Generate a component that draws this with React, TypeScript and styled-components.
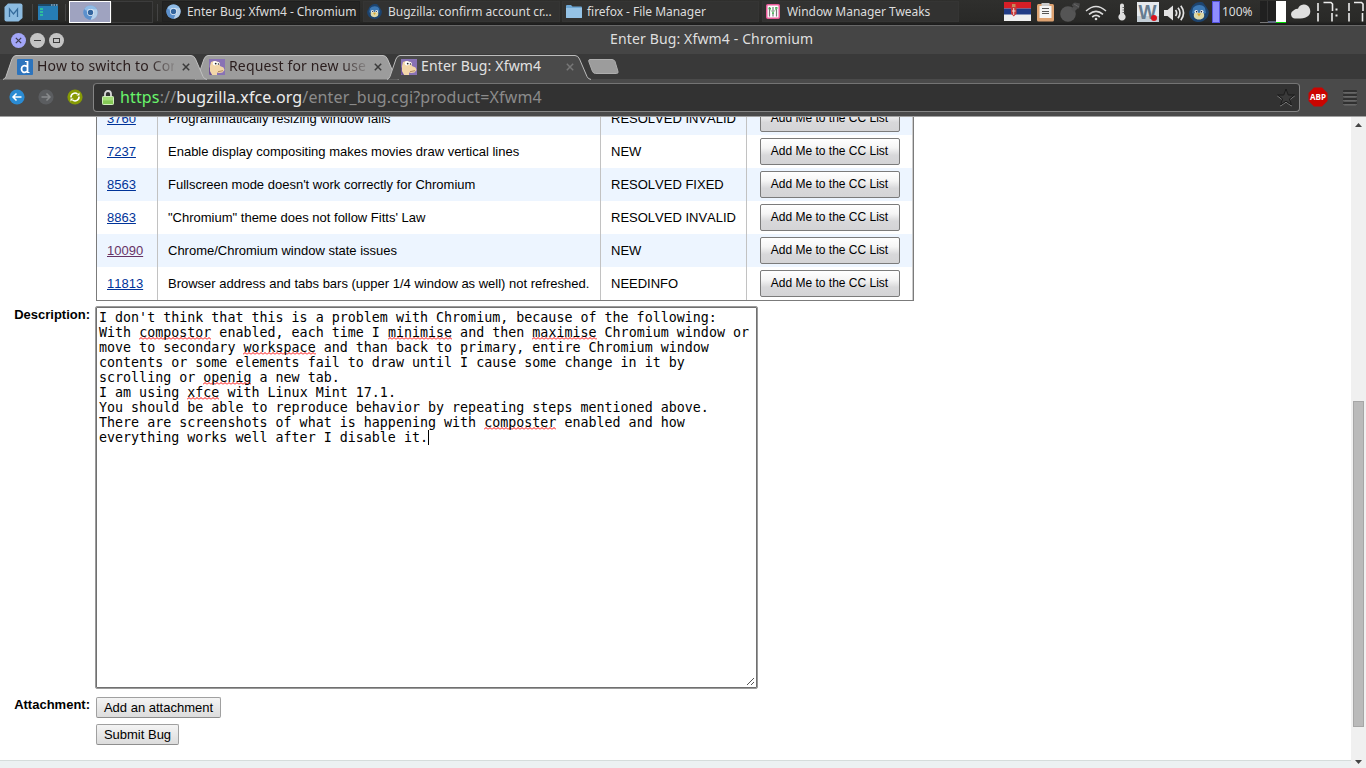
import React from 'react';
import styled, { createGlobalStyle, css } from 'styled-components';

const GlobalStyle = createGlobalStyle`
  * { box-sizing: border-box; }
  body { margin: 0; background: #fff; overflow: hidden; }
`;

const Desktop = styled.div`
  width: 1366px;
  height: 768px;
  display: flex;
  flex-direction: column;
  overflow: hidden;
  background: #fff;
  font-family: 'Liberation Sans', Arial, sans-serif;
  font-size: 13px;
  color: #000;
`;

/* ---------- desktop panel ---------- */

const Panel = styled.header`
  height: 25px;
  flex: none;
  display: flex;
  align-items: flex-start;
  background: linear-gradient(#2f2f2d, #292927 85%, #1b1b1b);
  font-family: 'Noto Sans', sans-serif;
`;

const Slot = styled.div<{ $w: number; $gap?: number; $top?: number }>`
  flex: none;
  width: ${(p) => p.$w}px;
  margin-left: ${(p) => p.$gap ?? 0}px;
  margin-top: ${(p) => p.$top ?? 0}px;
  svg { display: block; }
`;

const Separator = styled.div<{ $gap: number }>`
  flex: none;
  width: 1px;
  height: 17px;
  margin: 4px 0 0 ${(p) => p.$gap}px;
  background: #444;
`;

const Pager = styled.div`
  flex: none;
  display: flex;
  margin: 1px 0 0 3px;
  height: 23px;
`;

const Workspace = styled.div<{ $active?: boolean }>`
  width: 42px;
  height: 22px;
  display: flex;
  align-items: center;
  justify-content: center;
  border: 1px solid ${(p) => (p.$active ? '#fff' : '#3c3c3c')};
  background: ${(p) => (p.$active ? '#9fa3c0' : '#2a2a29')};
`;

const Task = styled.div<{ $gap: number; $active?: boolean; $w: number }>`
  flex: none;
  display: flex;
  align-items: center;
  gap: 5px;
  width: ${(p) => p.$w}px;
  height: 21px;
  margin: 1px 0 0 ${(p) => p.$gap}px;
  padding-left: 3px;
  background: ${(p) => (p.$active ? '#242423' : '#323231')};
  border: 1px solid ${(p) => (p.$active ? '#202020' : '#353534')};
  color: #dcdcdc;
`;

const TaskIcon = styled.div`
  display: flex;
  width: 16px;
`;

const TaskLabel = styled.span<{ $ls?: number }>`
  font-size: 12px;
  line-height: 18px;
  letter-spacing: ${(p) => p.$ls ?? 0}px;
  white-space: nowrap;
`;

const Battery = styled.div`
  width: 8px;
  height: 22px;
  border: 1px solid #5654e0;
  background: #8f8dff;
`;

const BatteryText = styled.div`
  font-size: 12px;
  line-height: 22px;
  color: #dcdcdc;
  white-space: nowrap;
`;

/* ---------- window frame ---------- */

const TitleBar = styled.div`
  flex: none;
  height: 29px;
  display: flex;
  align-items: center;
  padding-left: 11px;
  border-top: 1px solid #686868;
  background: #454545;
`;

const WindowButtons = styled.div`
  display: flex;
  gap: 4px;
  width: 599px;
`;

const WindowTitle = styled.div`
  font: 14px/20px 'Noto Sans', sans-serif;
  letter-spacing: 0.14px;
  color: #dfdfdf;
  padding-bottom: 3px;
  white-space: nowrap;
`;

const TabStrip = styled.div`
  flex: none;
  display: flex;
  height: 25px;
  padding: 1px 0 0 3px;
  background: #393939;
`;

const Tab = styled.div<{ $first?: boolean; $z: number }>`
  position: relative;
  z-index: ${(p) => p.$z};
  width: 204px;
  height: 24px;
  flex: none;
  display: flex;
  align-items: center;
  padding-left: 14px;
  margin-left: ${(p) => (p.$first ? 0 : -12)}px;
`;

const TabShape = styled.svg`
  position: absolute;
  left: 0;
  top: 0;
`;

const TabIcon = styled.div`
  position: relative;
  width: 16px;
  height: 16px;
  svg { display: block; }
`;

const TabTitle = styled.div<{ $active?: boolean }>`
  position: relative;
  width: 137px;
  height: 22px;
  margin-left: 4px;
  overflow: hidden;
  white-space: nowrap;
  font: 14px/20px 'Noto Sans', sans-serif;
  letter-spacing: 0.16px;
  color: ${(p) => (p.$active ? '#e2e2e2' : '#2a1d1d')};
  ${(p) =>
    !p.$active &&
    css`
      mask-image: linear-gradient(to right, #000 112px, transparent 142px);
    `}
`;

const TabClose = styled.svg`
  position: relative;
  margin-left: 8px;
`;

const NewTab = styled.svg`
  flex: none;
  margin: 4px 0 0 -3px;
`;

const Toolbar = styled.div`
  flex: none;
  display: flex;
  height: 38px;
  padding: 4px 0 0 9px;
  background: #4a4a4a;
  border-bottom: 1px solid #a0a0a0;
`;

const NavButton = styled.div`
  width: 29px;
  padding-top: 6px;
  svg { display: block; }
`;

const Omnibox = styled.div`
  display: flex;
  align-items: center;
  width: 1207px;
  height: 29px;
  margin-left: -3px;
  padding: 0 3px 0 8px;
  border: 1px solid #858585;
  border-top-color: #747474;
  border-radius: 4px;
  background: #323232;
  font: 16px/24px 'Noto Sans', sans-serif;
  letter-spacing: 0.14px;
  color: #8b8b8b;
`;

const Url = styled.div`
  flex: 1;
  padding: 0 0 2px 6px;
  white-space: nowrap;
`;

const Scheme = styled.span`
  color: #69f56b;
`;

const Host = styled.span`
  color: #ececec;
`;

const ToolButton = styled.div<{ $gap: number; $top: number }>`
  margin: ${(p) => p.$top}px 0 0 ${(p) => p.$gap}px;
  svg { display: block; }
`;

/* ---------- page ---------- */

const Viewport = styled.div`
  flex: 1;
  min-height: 0;
  display: flex;
  overflow: hidden;
`;

const Page = styled.main`
  width: 1351px;
  height: 651px;
  display: flex;
  flex-direction: column;
  overflow: hidden;
`;

const BugTable = styled.div`
  flex: none;
  width: 818px;
  height: 200px;
  margin: -16px 0 0 96px;
  border: 1px solid #7b7b7b;
  box-shadow: inset -1px 0 #ccc;
  font-kerning: none;
`;

const BugRow = styled.div<{ $alt: boolean }>`
  display: grid;
  grid-template-columns: 61px 443px 146px 164px;
  width: 815px;
  height: 33px;
  background: ${(p) => (p.$alt ? '#edf5ff' : '#fff')};
`;

const Cell = styled.div`
  padding-left: 10px;
  border-right: 1px solid #c2c2c2;
  line-height: 33px;
  white-space: nowrap;
`;

const ActionCell = styled.div`
  padding: 3px 0 0 13px;
`;

const BugLink = styled.a<{ $visited?: boolean }>`
  color: ${(p) => (p.$visited ? '#663366' : '#039')};
  text-decoration: underline;
`;

const CcButton = styled.button`
  display: block;
  width: 140px;
  height: 27px;
  padding: 0 1px 2px 0;
  border: 1px solid #7b7b7b;
  border-radius: 2px;
  background: linear-gradient(#fff, #f5f5f5 35%, #d8d8da 65%, #d4d4d6);
  font: 12px 'Liberation Sans', Arial, sans-serif;
  color: #000;
  white-space: nowrap;
`;

const Form = styled.form`
  flex: none;
  display: grid;
  grid-template-columns: 90px 1fr;
  column-gap: 5px;
  padding-top: 5px;
`;

const Label = styled.label<{ $top: number }>`
  padding-top: ${(p) => p.$top}px;
  text-align: right;
  font-weight: bold;
  line-height: 15px;
`;

const Editor = styled.div`
  position: relative;
  width: 663px;
  height: 383px;
  padding: 3px 2px;
  border: 1px solid #9b9b9b;
  border-radius: 2px;
  box-shadow: inset 0 0 0 1px #707070;
  font: 13.333px/15px 'DejaVu Sans Mono', monospace;
  white-space: pre;
`;

const Line = styled.div`
  display: flex;
  height: 15px;
  padding-left: 1px;
`;

const Misspelt = styled.span`
  background-image: url("data:image/svg+xml,%3Csvg xmlns='http://www.w3.org/2000/svg' width='4' height='3'%3E%3Cpath d='M0 2.5 L2 .5 L4 2.5' fill='none' stroke='red' stroke-width='1'/%3E%3C/svg%3E");
  background-repeat: repeat-x;
  background-position: 0 12px;
`;

const Caret = styled.span`
  width: 1px;
  height: 15px;
  background: #000;
`;

const Grip = styled.svg`
  position: absolute;
  right: 2px;
  bottom: 2px;
`;

const FormButton = styled.button<{ $w: number; $top: number }>`
  display: block;
  width: ${(p) => p.$w}px;
  height: 21px;
  margin: ${(p) => p.$top}px 0 0 1px;
  padding: 0;
  border: 1px solid #a0a0a0;
  border-bottom-color: #8e8e8e;
  border-radius: 2px;
  background: linear-gradient(#f4f4f4, #dcdcdc);
  font: 13px/17px 'Liberation Sans', Arial, sans-serif;
  color: #000;
`;

const Footer = styled.footer`
  margin-top: auto;
  flex: none;
  height: 8px;
  border-top: 1px solid #d5dcdb;
  background: #ecf1f2;
`;

const Scrollbar = styled.div`
  width: 15px;
  display: flex;
  flex-direction: column;
  align-items: center;
  background: #f0f0f0;
  padding: 6px 0 4px;
`;

const Thumb = styled.div`
  width: 11px;
  height: 326px;
  margin: 274px 0 auto 0;
  border: 1px solid #a6a6a6;
  background: #bababa;
`;

/* ---------- drawings ---------- */

const ChromiumIcon = () => (
  <svg width="15" height="15" viewBox="0 0 16 16">
    <circle cx="8" cy="8" r="7.6" fill="#6b9ed6" />
    <path d="M8 8 1.2 4.6A7.6 7.6 0 0 1 15 5.2H8z" fill="#8fbbe6" />
    <path d="M8 4.500h6.700A7.6 7.6 0 0 1 8 15.6L11 9z" fill="#b4cfea" />
    <path d="M1.3 4.500A7.6 7.6 0 0 0 8 15.6L10.4 10 6 9.500z" fill="#5c90cc" />
    <circle cx="8" cy="8" r="3.700" fill="#e8eff7" />
    <circle cx="8" cy="8" r="2.900" fill="#33659f" />
  </svg>
);

const BirdIcon = ({ size }: { size: number }) => (
  <svg width={size} height={size} viewBox="0 0 20 20">
    <path d="M2 7C3 2 9-1 14 .5l3 4 2.500 4C21 14 16 20 10 20S-1 15 .5 9z" fill="#1d446f" />
    <path d="M4 6c3-4 10-4 12 0l1 5-7 3-7-3z" fill="#3c78b4" />
    <path d="M5 12c1-2.500 3-2.500 5-1 2-1.500 4-1.500 5 1 .8 3-1 5.500-5 5.500S4.200 15 5 12z" fill="#ddd8a8" />
    <circle cx="7.200" cy="9.600" r="1.700" fill="#f4f6f8" />
    <circle cx="12.800" cy="9.600" r="1.700" fill="#f4f6f8" />
    <circle cx="7.600" cy="9.800" r=".8" fill="#112" />
    <circle cx="12.400" cy="9.800" r=".8" fill="#112" />
    <path d="M8 11.500h4l-2 3z" fill="#d9a52f" />
  </svg>
);

const BuggieIcon = () => (
  <svg width="16" height="16" viewBox="0 0 16 16">
    <rect width="16" height="16" fill="#8872b5" />
    <path d="M1 7 2 3l3-1 5 1 1 4 3.500 1.500 1 2.500-2 2.500-3.500.5-2-.5L8 16H3L1 12z" fill="#f2d6a8" />
    <path d="M1 8v5l2 3H1l-1-2V9z" fill="#6b5090" />
    <circle cx="6" cy="4.200" r="2.200" fill="#fff" />
    <circle cx="9" cy="4.600" r="1.700" fill="#fff" />
    <circle cx="6.700" cy="4.600" r=".9" fill="#222" />
    <circle cx="9.400" cy="5" r=".7" fill="#222" />
    <path d="M9 12.700 14 11.700" stroke="#9d744c" strokeWidth=".8" />
  </svg>
);

const DocIcon = () => (
  <svg width="16" height="16" viewBox="0 0 16 16">
    <rect width="16" height="16" rx="1" fill="#2d74bd" />
    <path d="M10.500 2v11.500M10 7.500C7 5.800 4.500 7 4.500 10s2.500 4.500 5.500 2.500" fill="none" stroke="#fff" strokeWidth="1.800" />
    <path d="M8 2.500h3M10 13.500h2.500" stroke="#fff" />
  </svg>
);

const MenuLogo = () => (
  <svg width="19" height="19" viewBox="0 0 19 19">
    <path d="M4 .5h12.500q2 0 2 2V15l-4 3.500H2.500q-2 0-2-2V4z" fill="#8cbbe0" />
    <path d="M5.500 14V6l4 5 4-5v8" fill="none" stroke="#356b9b" strokeWidth="1.300" />
  </svg>
);

const ShowDesktopIcon = () => (
  <svg width="20" height="16" viewBox="0 0 20 16">
    <rect width="20" height="16" fill="#267db5" />
    <rect width="20" height="2" fill="#1c4a68" />
    <path d="M13 1h1.500M15.500 1H17M18 1h1.500" stroke="#cde" />
    <path d="M2 5h3M2 8h3M2 11h3" stroke="#2dbd9d" strokeWidth="2" />
  </svg>
);

const FolderIcon = () => (
  <svg width="16" height="13" viewBox="0 0 16 13">
    <path d="M0 1q0-1 1-1h4l1.500 1.500H15q1 0 1 1V13H0z" fill="#6da6d3" />
    <path d="M0 3h16v9q0 1-1 1H1q-1 0-1-1z" fill="#95c3e6" />
  </svg>
);

const TweaksIcon = () => (
  <svg width="14" height="15" viewBox="0 0 14 15">
    <rect x=".75" y=".75" width="12.500" height="13.500" rx="1" fill="#fff" stroke="#e85b98" strokeWidth="1.500" />
    <path d="M3.500 3v9.500M7 3v9.500M10.500 3v9.500" stroke="#777" strokeWidth="1.200" />
    <path d="M2.500 4.500h2.500M6 9h2M9 4h2.500" stroke="#3fb750" strokeWidth="1.700" />
    <path d="M4 5 7 9l3.500-5" fill="none" stroke="#7ccc84" strokeWidth=".8" />
  </svg>
);

const FlagIcon = () => (
  <svg width="27" height="19" viewBox="0 0 27 19">
    <rect width="27" height="19" fill="#f0f0f0" />
    <rect width="27" height="6.500" fill="#d71f27" />
    <rect y="6.500" width="27" height="6" fill="#223c85" />
    <path d="M7 4.500h5.500v7l-2.700 3L7 11.500z" fill="#c8383a" />
    <path d="M8 2h3.500v3H8z" fill="#c98a5b" />
    <path d="M9.700 6v7M8 9h3.500" stroke="#f0d8d0" />
  </svg>
);

const ClipboardIcon = () => (
  <svg width="17" height="19" viewBox="0 0 17 19">
    <rect y="1" width="17" height="17.500" rx="1.500" fill="#dda271" />
    <rect x="2.500" y="3" width="12" height="12" fill="#f4f4f4" />
    <path d="M4.500 0h8v3h-8z" fill="#ccc" />
    <path d="M5 5.500h7M5 8.500h7M5 10.500h7" stroke="#555" />
  </svg>
);

const MouseIcon = () => (
  <svg width="21" height="20" viewBox="0 0 21 20">
    <circle cx="8" cy="12" r="7.800" fill="#555" />
    <path d="m11 7 4-4 3 3-4 4z" fill="#505050" />
    <path d="M12 4q0-3 3-3.500L20 1.500l-1 5q-2 0-3-1z" fill="#4b4b4b" />
    <path d="M14 2l5 3" stroke="#666" />
  </svg>
);

const WifiIcon = () => (
  <svg width="22" height="16" viewBox="0 0 22 16" fill="none" stroke="#dcdcdc">
    <path d="M1 6Q11-3 21 6" strokeWidth="1.400" />
    <path d="M4 9.300q7-6 14 0" strokeWidth="1.700" />
    <path d="M7.200 12q3.800-3.300 7.600 0" strokeWidth="1.700" />
    <circle cx="11" cy="14" r="1.300" fill="#dcdcdc" stroke="none" />
  </svg>
);

const ThermometerIcon = () => (
  <svg width="8" height="18" viewBox="0 0 8 18">
    <path d="M2 2.500a2 2 0 0 1 4 0V11a3.600 3.600 0 1 1-4 0z" fill="#dedede" />
    <path d="M4.500 4.500h2M4.500 7h2M4.500 9.500h2" stroke="#555" strokeWidth=".9" />
  </svg>
);

const WordLetter = styled.text`
  font: bold 20px 'Liberation Sans', Arial, sans-serif;
  fill: #667c90;
`;

const WordIcon = () => (
  <svg width="22" height="20" viewBox="0 0 22 20">
    <rect width="22" height="20" fill="#e6eaee" />
    <path d="M0 14h22v6H0z" fill="#c4ced6" />
    <WordLetter x="10.500" y="16.500" textAnchor="middle" textLength="18" lengthAdjust="spacingAndGlyphs">W</WordLetter>
    <circle cx="17" cy="16" r="3" fill="#d9141e" />
  </svg>
);

const SpeakerIcon = () => (
  <svg width="21" height="18" viewBox="0 0 21 18">
    <path d="M0 6h3.500L9 1.500v15L3.500 12H0z" fill="#e2e2e2" />
    <path d="M11.500 6q2.300 3 0 6M14 3.800q4 5.200 0 10.400M16.800 1.800q5.500 7.200 0 14.400" fill="none" stroke="#e2e2e2" strokeWidth="1.700" />
  </svg>
);

const CpuGraph = () => (
  <svg width="26" height="22" viewBox="0 0 26 22">
    <rect width="26" height="22" fill="#202020" />
    <path d="M7.500 0v22" stroke="#333" />
    <rect y="21" width="8" height="1" fill="#777" />
    <rect x="8" y="20" width="8" height="2" fill="#5c647c" />
    <rect x="16" width="10" height="21" fill="#fff" />
    <rect x="16" y="21" width="10" height="1" fill="#0d0" />
  </svg>
);

const CloudIcon = () => (
  <svg width="20" height="16" viewBox="0 0 20 16">
    <path d="M4 14.500A4.200 4.200 0 0 1 2.500 6.500Q4.500 4.300 7 4.800A6.200 6.200 0 0 1 18.500 4q2.500 6-3 9-3 1.800-11.500 1.500z" fill="#dedede" />
  </svg>
);

const LcdClock = () => (
  <svg width="49" height="22" viewBox="0 0 49 22" fill="none" stroke="#ececec" strokeWidth="1.600">
    <path d="M1 2v8M1 12v8.500M6.500 1.500h7.500l1.500 1.500v7M15 12v8.500" />
    <path d="M32 2v8M32 12v8.500M37 1.500h7.500l1.500 1.500v7M45.500 12v8.500" />
    <path d="M18.500 8.500h2M18.500 14.500h2" strokeWidth="2" />
  </svg>
);

const CircleButton = ({ kind }: { kind: 'close' | 'min' | 'max' }) => (
  <svg width="15" height="15" viewBox="0 0 15 15" fill="none">
    <circle cx="7.500" cy="7.500" r="7.500" fill={kind === 'close' ? '#a3a6f8' : '#c4c4c4'} />
    {kind === 'close' && <path d="m4.800 4.800 5.400 5.400m0-5.400-5.400 5.400" stroke="#3c3c50" strokeWidth="1.200" />}
    {kind === 'min' && <path d="M4 7.500h7" stroke="#3c3c3c" />}
    {kind === 'max' && <rect x="4.500" y="5.500" width="6" height="4" stroke="#3c3c3c" />}
  </svg>
);

const NavIcon = ({ kind }: { kind: 'back' | 'forward' | 'reload' }) => {
  const fill = { back: '#2a8bd3', forward: '#5b5d60', reload: '#879b05' }[kind];
  return (
    <svg width="16" height="16" viewBox="0 0 16 16" fill="none" strokeWidth="1.500">
      <circle cx="8" cy="8" r="7.600" fill={fill} />
      {kind === 'back' && <path d="M12.500 8H4M7.500 4.500 4 8l3.500 3.500" stroke="#fff" />}
      {kind === 'forward' && <path d="M3.500 8H12M8.500 4.500 12 8l-3.500 3.500" stroke="#898b8d" />}
      {kind === 'reload' && (
        <>
          <path d="M4 8.500A4 4 0 0 1 10.500 5M12 7.500A4 4 0 0 1 5.500 11" stroke="#fff" strokeWidth="1.600" />
          <path d="M9.500 6.500h3v-3zM6.500 9.500h-3v3z" fill="#fff" />
        </>
      )}
    </svg>
  );
};

const LockIcon = () => (
  <svg width="12" height="15" viewBox="0 0 12 15">
    <path d="M3 7V4a3 3 0 0 1 6 0v3" fill="none" stroke="#d8d8d8" strokeWidth="1.800" />
    <rect x=".5" y="6.500" width="11" height="8" rx=".8" fill="#a2dc78" stroke="#d2efbd" />
    <path d="M1 10.500h10V14H1z" fill="#85c956" />
  </svg>
);

const StarIcon = () => (
  <svg width="20" height="19" viewBox="0 0 20 19" strokeLinejoin="round">
    <path d="m10 2 2.300 6h6.200l-5 3.900 2 6.100-5.500-3.800L4.500 18l2-6.100-5-3.900h6.200z" fill="none" stroke="#7c7c7c" />
    <path d="m10 1 2.300 6h6.200l-5 3.900 2 6.100-5.500-3.800L4.500 17l2-6.100-5-3.900h6.200z" fill="#3a3a3a" stroke="#191919" />
  </svg>
);

const AbpText = styled.text`
  font: bold 9px 'Open Sans', sans-serif;
  fill: #fff;
`;

const AbpIcon = () => (
  <svg width="20" height="20" viewBox="0 0 20 20">
    <path d="M6 .5h8L19.500 6v8L14 19.500H6L.5 14V6z" fill="#cb0400" />
    <AbpText x="10" y="13.300" textAnchor="middle" textLength="16" lengthAdjust="spacingAndGlyphs">ABP</AbpText>
  </svg>
);

const MenuIcon = () => (
  <svg width="14" height="16" viewBox="0 0 14 16">
    {[0, 4, 8, 12].map((y) => (
      <g key={y}>
        <rect y={y} width="14" height="3" rx="1" fill="#303030" />
        <path d={`M.5 ${y + 2}q0 .8 1 .8h11q1 0 1-.8`} fill="none" stroke="#808080" />
      </g>
    ))}
  </svg>
);

const Arrow = ({ up }: { up?: boolean }) => (
  <svg width="7" height="4" viewBox="0 0 7 4">
    <path d={up ? 'M0 4 3.500 0 7 4z' : 'M0 0 3.500 4 7 0z'} fill="#454545" />
  </svg>
);

/* ---------- content ---------- */

const bugs = [
  { id: '3760', summary: 'Programmatically resizing window fails', status: 'RESOLVED INVALID' },
  { id: '7237', summary: 'Enable display compositing makes movies draw vertical lines', status: 'NEW' },
  { id: '8563', summary: "Fullscreen mode doesn't work correctly for Chromium", status: 'RESOLVED FIXED' },
  { id: '8863', summary: '"Chromium" theme does not follow Fitts\' Law', status: 'RESOLVED INVALID' },
  { id: '10090', summary: 'Chrome/Chromium window state issues', status: 'NEW', visited: true },
  { id: '11813', summary: 'Browser address and tabs bars (upper 1/4 window as well) not refreshed.', status: 'NEEDINFO' },
];

const description = [
  "I don't think that this is a problem with Chromium, because of the following:",
  'With compostor enabled, each time I minimise and then maximise Chromium window or',
  'move to secondary workspace and than back to primary, entire Chromium window',
  'contents or some elements fail to draw until I cause some change in it by',
  'scrolling or openig a new tab.',
  'I am using xfce with Linux Mint 17.1.',
  'You should be able to reproduce behavior by repeating steps mentioned above.',
  'There are screenshots of what is happening with composter enabled and how',
  'everything works well after I disable it.',
];

const flagged = /(compostor|minimise|maximise|workspace|openig|xfce|composter)/;

const tabs = [
  { title: 'How to switch to Com', icon: <DocIcon />, z: 2 },
  { title: 'Request for new use', icon: <BuggieIcon />, z: 1 },
  { title: 'Enter Bug: Xfwm4', icon: <BuggieIcon />, z: 3, active: true },
];

export default function App() {
  return (
    <Desktop>
      <GlobalStyle />
      <Panel>
        <Slot $w={19} $gap={4} $top={3}><MenuLogo /></Slot>
        <Separator $gap={9} />
        <Slot $w={20} $gap={5} $top={4}><ShowDesktopIcon /></Slot>
        <Separator $gap={7} />
        <Pager>
          <Workspace $active><ChromiumIcon /></Workspace>
          <Workspace />
        </Pager>
        <Separator $gap={4} />
        <Task $w={198} $gap={4} $active><TaskIcon><ChromiumIcon /></TaskIcon><TaskLabel $ls={-0.06}>Enter Bug: Xfwm4 - Chromium</TaskLabel></Task>
        <Task $w={197} $gap={3}><TaskIcon><BirdIcon size={15} /></TaskIcon><TaskLabel>Bugzilla: confirm account cr...</TaskLabel></Task>
        <Task $w={197} $gap={2}><TaskIcon><FolderIcon /></TaskIcon><TaskLabel $ls={-0.03}>firefox - File Manager</TaskLabel></Task>
        <Task $w={197} $gap={3}><TaskIcon><TweaksIcon /></TaskIcon><TaskLabel $ls={-0.04}>Window Manager Tweaks</TaskLabel></Task>
        <Slot $w={27} $gap={45} $top={2}><FlagIcon /></Slot>
        <Slot $w={17} $gap={6} $top={3}><ClipboardIcon /></Slot>
        <Slot $w={21} $gap={6} $top={2}><MouseIcon /></Slot>
        <Slot $w={22} $gap={4} $top={5}><WifiIcon /></Slot>
        <Slot $w={8} $gap={11} $top={3}><ThermometerIcon /></Slot>
        <Slot $w={22} $gap={11} $top={2}><WordIcon /></Slot>
        <Slot $w={21} $gap={5} $top={4}><SpeakerIcon /></Slot>
        <Slot $w={20} $gap={4} $top={2}><BirdIcon size={20} /></Slot>
        <Slot $w={8} $gap={3} $top={1}><Battery /></Slot>
        <Slot $w={34} $gap={2} $top={1}><BatteryText>100%</BatteryText></Slot>
        <Slot $w={26} $gap={4} $top={1}><CpuGraph /></Slot>
        <Slot $w={20} $gap={5} $top={4}><CloudIcon /></Slot>
        <Slot $w={49} $gap={6} $top={1}><LcdClock /></Slot>
      </Panel>

      <TitleBar>
        <WindowButtons>
          <CircleButton kind="close" />
          <CircleButton kind="min" />
          <CircleButton kind="max" />
        </WindowButtons>
        <WindowTitle>Enter Bug: Xfwm4 - Chromium</WindowTitle>
      </TitleBar>

      <TabStrip>
        {tabs.map((t, i) => (
          <Tab key={t.title} $first={i === 0} $z={t.z}>
            <TabShape width="204" height="25" viewBox="0 0 204 25">
              <path
                d="M0 24.500 Q2 24 3 21.500 L9 4 Q10.500 .5 13 .5 H188 Q191 .5 192.500 4 L200 21.500 Q201 24 204 24.500"
                fill={t.active ? '#4a4a4a' : '#9c9c9c'}
                stroke={t.active ? '#bcbcbc' : '#c0c0c0'}
              />
            </TabShape>
            <TabIcon>{t.icon}</TabIcon>
            <TabTitle $active={t.active}>{t.title}</TabTitle>
            <TabClose width="8" height="8" viewBox="0 0 8 8">
              <path d="m.8.800 6.400 6.400m0-6.400L.8 7.200" stroke={t.active ? '#777' : '#3b3b3b'} strokeWidth="1.500" />
            </TabClose>
          </Tab>
        ))}
        <NewTab width="31" height="16" viewBox="0 0 31 16">
          <path d="M2 .5h22q2 0 3 2l3 10q.5 2-1.500 2H7.500q-2 0-3-2L.8 2.500Q.3.500 2 .5z" fill="#9c9c9c" stroke="#aeaeae" />
        </NewTab>
      </TabStrip>

      <Toolbar>
        <NavButton><NavIcon kind="back" /></NavButton>
        <NavButton><NavIcon kind="forward" /></NavButton>
        <NavButton><NavIcon kind="reload" /></NavButton>
        <Omnibox>
          <LockIcon />
          <Url><Scheme>https</Scheme>://<Host>bugzilla.xfce.org</Host>/enter_bug.cgi?product=Xfwm4</Url>
          <StarIcon />
        </Omnibox>
        <ToolButton $gap={8} $top={4}><AbpIcon /></ToolButton>
        <ToolButton $gap={15} $top={7}><MenuIcon /></ToolButton>
      </Toolbar>

      <Viewport>
        <Page>
          <BugTable>
            {bugs.map((b, i) => (
              <BugRow key={b.id} $alt={i % 2 === 0}>
                <Cell><BugLink $visited={b.visited}>{b.id}</BugLink></Cell>
                <Cell>{b.summary}</Cell>
                <Cell>{b.status}</Cell>
                <ActionCell><CcButton type="button">Add Me to the CC List</CcButton></ActionCell>
              </BugRow>
            ))}
          </BugTable>
          <Form>
            <Label $top={1}>Description:</Label>
            <Editor>
              {description.map((line, i) => (
                <Line key={i}>
                  {line.split(flagged).map((part, j) =>
                    flagged.test(part) ? <Misspelt key={j}>{part}</Misspelt> : <span key={j}>{part}</span>
                  )}
                  {i === description.length - 1 && <Caret />}
                </Line>
              ))}
              <Grip width="9" height="9" viewBox="0 0 9 9">
                <path d="M1 8 8 1M5 8l3-3" stroke="#555" />
              </Grip>
            </Editor>
            <Label $top={8}>Attachment:</Label>
            <div>
              <FormButton type="button" $w={125} $top={8}>Add an attachment</FormButton>
              <FormButton type="button" $w={83} $top={6}>Submit Bug</FormButton>
            </div>
          </Form>
          <Footer />
        </Page>
        <Scrollbar>
          <Arrow up />
          <Thumb />
          <Arrow />
        </Scrollbar>
      </Viewport>
    </Desktop>
  );
}
